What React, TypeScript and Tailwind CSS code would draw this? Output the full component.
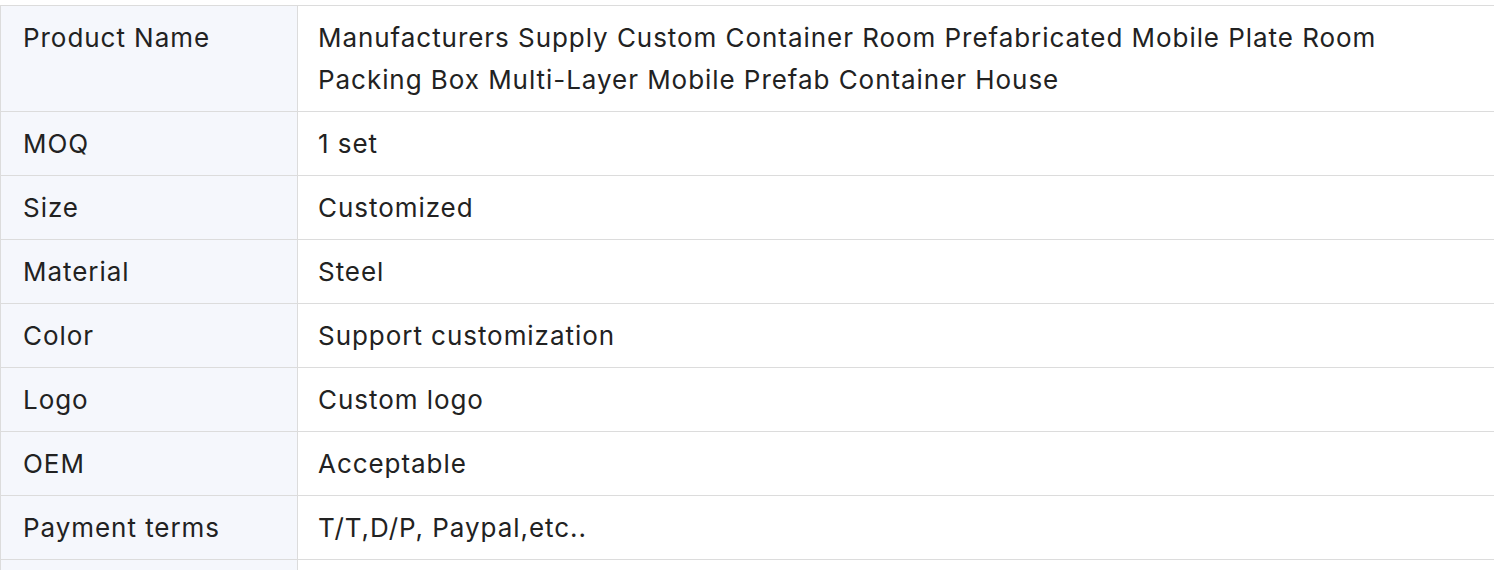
const rows: [string, string][] = [
  ['Product Name', 'Manufacturers Supply Custom Container Room Prefabricated Mobile Plate Room Packing Box Multi-Layer Mobile Prefab Container House'],
  ['MOQ', '1 set'],
  ['Size', 'Customized'],
  ['Material', 'Steel'],
  ['Color', 'Support customization'],
  ['Logo', 'Custom logo'],
  ['OEM', 'Acceptable'],
  ['Payment terms', 'T/T,D/P, Paypal,etc..'],
  ['', ''],
]

export default function App() {
  return (
    <div className="w-[1494px] h-[570px] overflow-hidden bg-white pt-[5px] font-['Inter',sans-serif] text-[#222]">
      <table className="w-[1510px] border-collapse text-[26px] leading-[42px] tracking-[0.95px]">
        <tbody>
          {rows.map(([k, v], i) => (
            <tr key={i}>
              <td className="w-[297px] border border-[#dcdcdc] bg-[#f5f7fc] px-[22px] py-[10.5px] align-top">{k || '\u00a0'}</td>
              <td className="border border-[#dcdcdc] bg-white pl-[20px] pr-[80px] py-[10.5px] align-top">{v || '\u00a0'}</td>
            </tr>
          ))}
        </tbody>
      </table>
    </div>
  )
}
